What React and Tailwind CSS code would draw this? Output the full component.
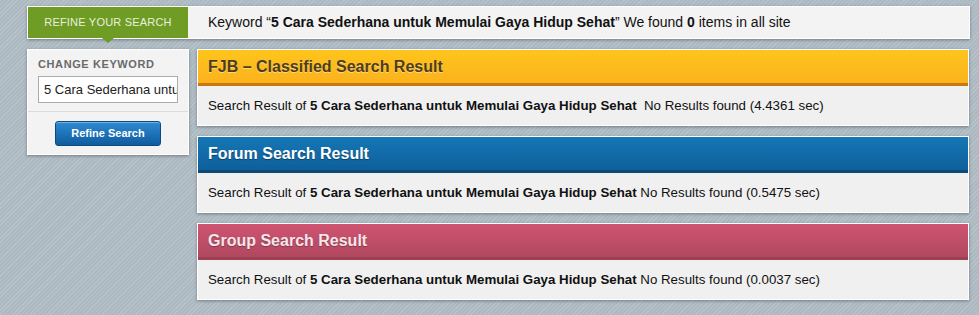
import React from 'react';

const kw = '5 Cara Sederhana untuk Memulai Gaya Hidup Sehat';

const ResultPanel = ({ title, head, titleClass, time, gap }) => (
    <div className="border border-white bg-[#f0f0f0] shadow-[0_1px_3px_rgba(0,0,0,0.35)]">
        <div className={`h-[36px] flex items-center px-[10px] border-b-[3px] ${head}`}>
            <span className={`text-[16px] font-bold ${titleClass}`}>{title}</span>
        </div>
        <div className="h-[39px] flex items-center px-[10px] text-[13.3px] text-[#111]">
            <span>
                Search Result of <b>{kw}</b>{gap ? '\u00a0 ' : ' '}No Results found ({time} sec)
            </span>
        </div>
    </div>
);

export default function App() {
    return (
        <div
            className="w-[979px] h-[315px] overflow-hidden bg-[repeating-linear-gradient(135deg,#b7c3cb_0px,#b7c3cb_1px,#adb9c1_1px,#adb9c1_3px)] font-['Liberation_Sans',Arial,sans-serif] pt-[6px] pl-[27px] pr-[10px]"
        >
            <div className="w-[943px] h-[33px] flex border border-white bg-[#f3f3f3] shadow-[0_1px_3px_rgba(0,0,0,0.35)]">
                <div className="relative w-[160px] bg-[#6f9c24] flex items-center justify-center text-[11px] tracking-[0.2px] text-[#e8f0dc]">
                    REFINE YOUR SEARCH
                    <div className="absolute left-[74px] -bottom-[5px] w-0 h-0 border-l-[6px] border-r-[6px] border-t-[5px] border-l-transparent border-r-transparent border-t-[#6f9c24]" />
                </div>
                <div className="flex items-center pl-[20px] text-[14px] text-[#111]">
                    <span>
                        Keyword “<b>{kw}</b>” We found <b>0</b> items in all site
                    </span>
                </div>
            </div>

            <div className="flex gap-[8px] mt-[10px]">
                <div className="w-[162px] h-[106px] shrink-0 border border-white bg-[#f3f3f3] shadow-[0_1px_3px_rgba(0,0,0,0.35)] flex flex-col">
                    <div className="px-[10px] pt-[8px]">
                        <div className="text-[11px] font-bold tracking-[0.6px] text-[#6a6a6a] leading-[13px]">CHANGE KEYWORD</div>
                        <div className="mt-[5px] w-[140px] h-[27px] border border-[#acacac] bg-white flex items-center px-[5px] text-[13px] text-[#222] overflow-hidden whitespace-nowrap">
                            5 Cara Sederhana untuk
                        </div>
                    </div>
                    <div className="mt-[8px] border-t border-[#dcdcdc] flex justify-center pt-[9px]">
                        <button className="w-[106px] h-[25px] rounded-[3px] border border-[#0b4a7f] bg-[linear-gradient(#2e8ad2,#0f5c9e)] text-white text-[11px] font-bold shadow-[inset_0_1px_0_rgba(255,255,255,0.35)]">
                            Refine Search
                        </button>
                    </div>
                </div>

                <div className="flex-1 flex flex-col gap-[10px]">
                    <ResultPanel
                        title="FJB – Classified Search Result"
                        head="bg-[linear-gradient(#ffc51c,#fbb21e)] border-[#c8780f]"
                        titleClass="text-[#4d3d1c] [text-shadow:0_1px_0_rgba(255,255,255,0.45)]"
                        time="4.4361"
                        gap
                    />
                    <ResultPanel
                        title="Forum Search Result"
                        head="bg-[linear-gradient(#1577b6,#0f5f9a)] border-[#0c4a78]"
                        titleClass="text-white [text-shadow:0_1px_1px_rgba(0,0,0,0.4)]"
                        time="0.5475"
                    />
                    <ResultPanel
                        title="Group Search Result"
                        head="bg-[linear-gradient(#cf5472,#b0485f)] border-[#9d3f55]"
                        titleClass="text-[#f6e6ea] [text-shadow:0_1px_1px_rgba(0,0,0,0.3)]"
                        time="0.0037"
                    />
                </div>
            </div>
        </div>
    );
}
